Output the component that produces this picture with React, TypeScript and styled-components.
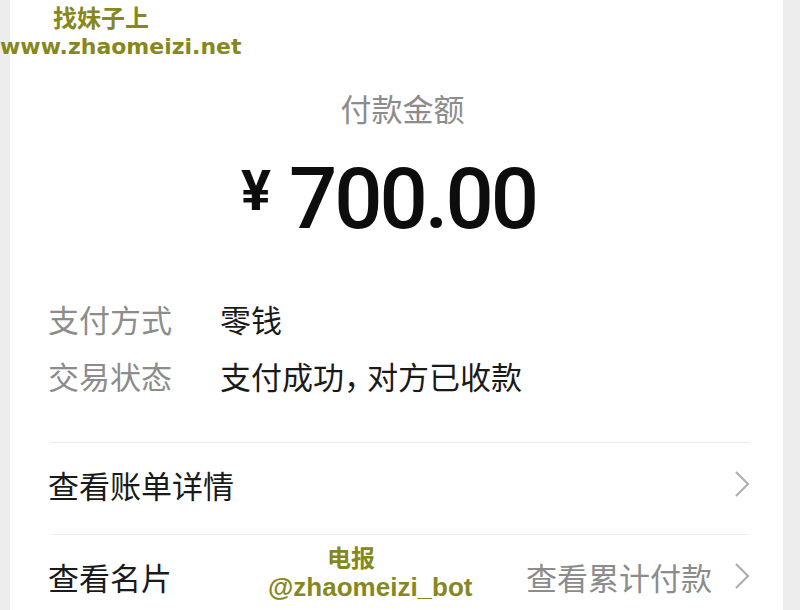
import * as React from "react";
import styled, { createGlobalStyle } from "styled-components";

const GlobalStyle = createGlobalStyle`
  html, body {
    margin: 0;
    padding: 0;
    background: #ededed;
    font-family: "Noto Sans CJK SC", "Noto Sans", sans-serif;
  }
`;

const Page = styled.div`
  position: relative;
  width: 800px;
  height: 610px;
  overflow: hidden;
  display: flex;
  padding: 0 17px 0 10px;
  box-sizing: border-box;
`;

const Card = styled.div`
  flex: 1;
  background: #fff;
  padding: 0 33px 0 38px;
  display: flex;
  flex-direction: column;
  & > * {
    flex-shrink: 0;
  }
`;

const Head = styled.div`
  display: flex;
  flex-direction: column;
  align-items: center;
  padding-top: 88px;
  margin-left: -38px;
  margin-right: -33px;
`;

const Title = styled.div`
  font-size: 31px;
  line-height: 40px;
  color: #8c8c8c;
  margin-left: 12px;
`;

const Amount = styled.div`
  display: flex;
  align-items: baseline;
  margin-top: 21px;
  margin-left: -16px;
  color: #0d0d0d;
`;

const Yen = styled.span`
  font-family: "Roboto", "Liberation Sans", sans-serif;
  font-weight: 700;
  font-size: 56px;
  margin-right: 18px;
  position: relative;
  top: -18px;
`;

const Digits = styled.span`
  font-family: "Roboto", "Liberation Sans", sans-serif;
  font-weight: 500;
  font-size: 85px;
  line-height: 100px;
  letter-spacing: -3px;
`;

const Info = styled.div`
  display: flex;
  flex-direction: column;
  gap: 17px;
  margin-top: 50px;
`;

const InfoRow = styled.div`
  display: flex;
  font-size: 31px;
  line-height: 40px;
`;

const Label = styled.span`
  width: 172px;
  color: #8c8c8c;
`;

const Value = styled.span`
  color: #1a1a1a;
`;

const Comma = styled.span`
  letter-spacing: -8px;
`;

const Spacer = styled.div`
  height: 46px;
`;

const Divider = styled.div`
  height: 1px;
  background: #ececec;
  margin-left: 2px;
`;

const LinkRow = styled.div`
  display: flex;
  align-items: center;
  justify-content: space-between;
  height: 91px;
  padding-bottom: 9px;
  box-sizing: border-box;
  font-size: 31px;
  color: #1a1a1a;
`;

const Side = styled.span`
  display: flex;
  align-items: center;
  gap: 22px;
  color: #8c8c8c;
`;

const Chevron = () => (
  <svg width="16" height="28" viewBox="0 0 16 28">
    <path d="M2 2 L14 14 L2 26" fill="none" stroke="#b0b0b0" strokeWidth="2.2" />
  </svg>
);

const Watermark = styled.div<{ $left: number; $top: number }>`
  position: absolute;
  left: ${(p) => p.$left}px;
  top: ${(p) => p.$top}px;
  color: #86881e;
  font-weight: 700;
  white-space: nowrap;
`;

const MarkLine = styled.div<{ $indent?: number; $size: number; $font: string }>`
  padding-left: ${(p) => p.$indent || 0}px;
  font-family: ${(p) => p.$font};
  font-size: ${(p) => p.$size}px;
  line-height: 30px;
  height: 30px;
`;

const CJK = `"Noto Sans CJK SC", sans-serif`;

export default function App() {
  return (
    <>
      <GlobalStyle />
      <Page>
        <Card>
          <Head>
            <Title>付款金额</Title>
            <Amount>
              <Yen>¥</Yen>
              <Digits>700.00</Digits>
            </Amount>
          </Head>
          <Info>
            <InfoRow>
              <Label>支付方式</Label>
              <Value>零钱</Value>
            </InfoRow>
            <InfoRow>
              <Label>交易状态</Label>
              <Value>
                支付成功<Comma>，</Comma>对方已收款
              </Value>
            </InfoRow>
          </Info>
          <Spacer />
          <Divider />
          <LinkRow>
            <span>查看账单详情</span>
            <Chevron />
          </LinkRow>
          <Divider />
          <LinkRow>
            <span>查看名片</span>
            <Side>
              查看累计付款
              <Chevron />
            </Side>
          </LinkRow>
        </Card>
        <Watermark $left={0} $top={2}>
          <MarkLine $indent={53} $size={24} $font={CJK}>
            找妹子上
          </MarkLine>
          <MarkLine $size={22} $font={`"DejaVu Sans", sans-serif`}>
            www.zhaomeizi.net
          </MarkLine>
        </Watermark>
        <Watermark $left={268} $top={542}>
          <MarkLine $indent={59} $size={24} $font={CJK}>
            电报
          </MarkLine>
          <MarkLine $size={26} $font={`"Liberation Sans", sans-serif`}>
            @zhaomeizi_bot
          </MarkLine>
        </Watermark>
      </Page>
    </>
  );
}
